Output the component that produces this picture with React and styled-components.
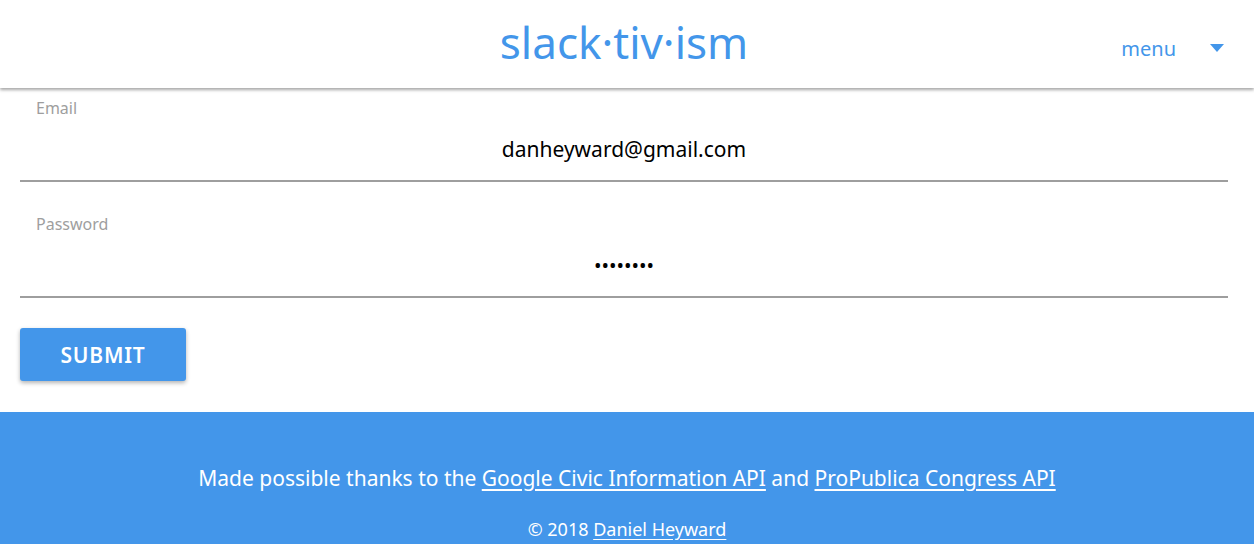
import React from 'react';
import styled, { createGlobalStyle } from 'styled-components';

const blue = '#4396ea';

const Global = createGlobalStyle`
  html, body {
    margin: 0;
    padding: 0;
    background: #fff;
    font-family: "Noto Sans", "Open Sans", sans-serif;
  }
`;

const Header = styled.header`
  position: relative;
  height: 88px;
  display: flex;
  align-items: center;
  justify-content: center;
  background: #fff;
  box-shadow: 0 2px 3px rgba(0, 0, 0, 0.35);
  z-index: 1;
`;

const Logo = styled.h1`
  margin: -4px 6px 0 0;
  font-size: 44px;
  font-weight: 400;
  color: ${blue};
`;

const Menu = styled.div`
  position: absolute;
  right: 30px;
  top: 36px;
  display: flex;
  align-items: center;
  gap: 34px;
  color: ${blue};
  font-size: 20px;
  line-height: 26px;
`;

const Caret = styled.span`
  width: 0;
  height: 0;
  border-left: 7px solid transparent;
  border-right: 7px solid transparent;
  border-top: 8px solid ${blue};
  margin-top: -2px;
`;

const Form = styled.form`
  padding: 10px 26px 0 20px;
  display: flex;
  flex-direction: column;
`;

const Field = styled.label`
  display: flex;
  flex-direction: column;
  margin-top: ${p => (p.$first ? 0 : 32)}px;
  border-bottom: 2px solid #9e9e9e;
`;

const Label = styled.span`
  padding-left: 16px;
  font-size: 16px;
  line-height: 20px;
  color: #9e9e9e;
`;

const Input = styled.input`
  box-sizing: border-box;
  border: none;
  outline: none;
  height: 62px;
  padding: 0;
  background: transparent;
  text-align: center;
  font-family: "Noto Sans", "Open Sans", sans-serif;
  font-size: ${p => (p.type === 'password' ? 20 : 21)}px;
  color: #000;
`;

const Button = styled.button`
  align-self: flex-start;
  margin-top: 30px;
  width: 166px;
  height: 53px;
  border: none;
  border-radius: 3px;
  background: ${blue};
  color: #fff;
  font-family: "Noto Sans", "Open Sans", sans-serif;
  font-size: 21px;
  font-weight: 600;
  letter-spacing: 0.8px;
  text-transform: uppercase;
  box-shadow: 0 2px 4px rgba(0, 0, 0, 0.3);
`;

const Footer = styled.footer`
  margin-top: 31px;
  background: ${blue};
  color: #fff;
  text-align: center;
  padding-top: 52px;
  padding-bottom: 20px;
`;

const Line = styled.p`
  margin: 0;
  font-size: ${p => p.$size}px;
  line-height: 28px;
  & + & {
    margin-top: 23px;
  }
  a {
    color: #fff;
    text-decoration: underline;
    text-underline-offset: 3px;
  }
`;

export default function App() {
  return (
    <>
      <Global />
      <Header>
        <Logo>slack·tiv·ism</Logo>
        <Menu>
          menu
          <Caret />
        </Menu>
      </Header>
      <Form onSubmit={e => e.preventDefault()}>
        <Field $first>
          <Label>Email</Label>
          <Input type="email" defaultValue="danheyward@gmail.com" />
        </Field>
        <Field>
          <Label>Password</Label>
          <Input type="password" defaultValue="password" />
        </Field>
        <Button type="submit">Submit</Button>
      </Form>
      <Footer>
        <Line $size={21}>
          Made possible thanks to the <a href="#">Google Civic Information API</a> and{' '}
          <a href="#">ProPublica Congress API</a>
        </Line>
        <Line $size={18}>
          © 2018 <a href="#">Daniel Heyward</a>
        </Line>
      </Footer>
    </>
  );
}
